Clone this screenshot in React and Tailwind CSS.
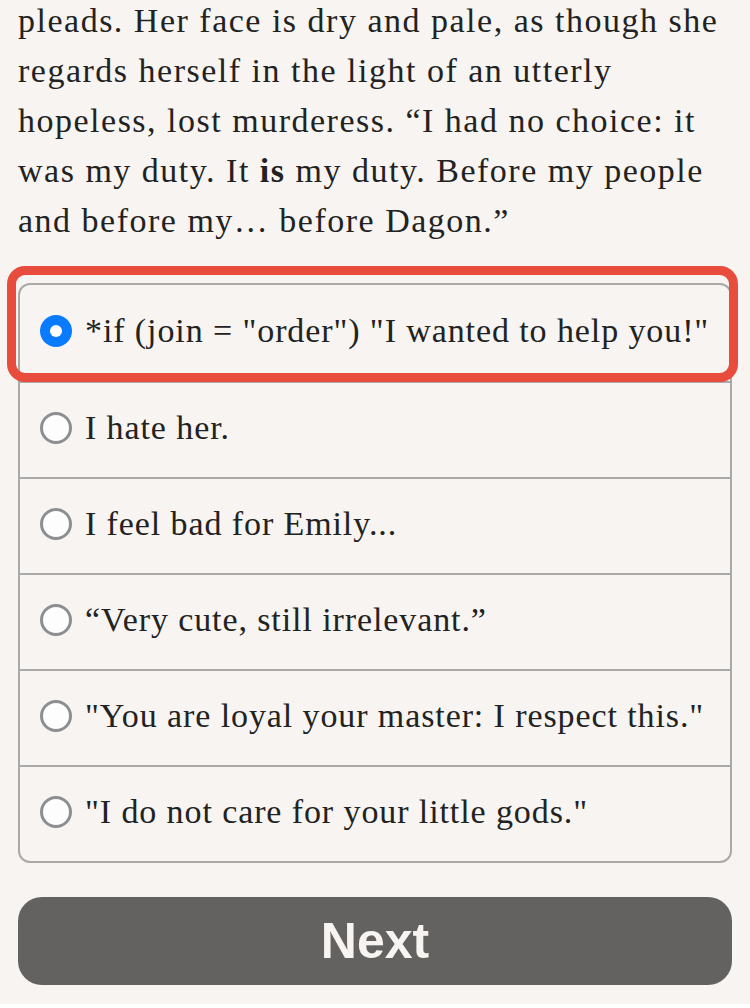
import React, { useState } from 'react';

const lines = [
  <>pleads. Her face is dry and pale, as though she</>,
  <>regards herself in the light of an utterly</>,
  <>hopeless, lost murderess. “I had no choice: it</>,
  <>was my duty. It <b>is</b> my duty. Before my people</>,
  <>and before my… before Dagon.”</>,
];

const options = [
  '*if (join = "order") "I wanted to help you!"',
  'I hate her.',
  'I feel bad for Emily...',
  '“Very cute, still irrelevant.”',
  '"You are loyal your master: I respect this."',
  '"I do not care for your little gods."',
];

const Radio = ({ checked }) =>
  checked ? (
    <span className="w-8 h-8 rounded-full bg-[#0a7aff] flex items-center justify-center shrink-0">
      <span className="w-3 h-3 rounded-full bg-white" />
    </span>
  ) : (
    <span className="w-8 h-8 rounded-full border-[3px] border-[#8e8e8e] bg-[#fdfdfd] shrink-0" />
  );

export default function App() {
  const [selected, setSelected] = useState(0);

  return (
    <div className="min-h-screen bg-[#f7f4f1] px-[18px] font-['Liberation_Serif',serif] text-[#222]">
      {/* story text */}
      <div className="text-[34px] leading-[50px] tracking-[1.5px] mt-[-4px]">
        {lines.map((l, i) => (
          <div key={i} className="whitespace-nowrap">{l}</div>
        ))}
      </div>

      {/* choices */}
      <div className="relative mt-[37px]">
        <div className="border-2 border-[#a9a9a9] rounded-[12px]">
          {options.map((o, i) => (
            <label
              key={i}
              onClick={() => setSelected(i)}
              className={`flex items-center gap-[13px] pl-[20px] pb-[5px] h-[96px] cursor-pointer ${
                i > 0 ? 'border-t-2 border-[#a9a9a9]' : ''
              }`}
            >
              <Radio checked={selected === i} />
              <span className="text-[34px] whitespace-nowrap tracking-[0.9px]">{o}</span>
            </label>
          ))}
        </div>
        <div className="absolute left-[-11px] right-[-6px] top-[-17px] h-[116px] border-[9px] border-[#e84c3d] rounded-[18px] pointer-events-none" />
      </div>

      <button className="mt-[34px] w-full h-[88px] rounded-[24px] bg-[#636260] text-[#f7f4f1] text-[50px] font-bold font-['Liberation_Sans',sans-serif]">
        Next
      </button>
    </div>
  );
}
